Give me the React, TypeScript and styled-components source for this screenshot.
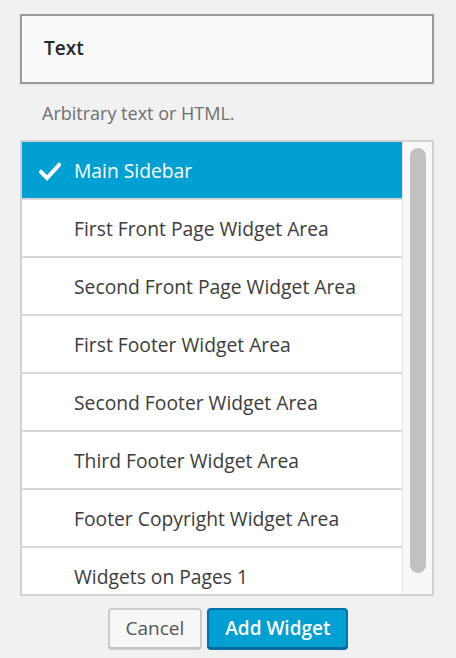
import React from "react";
import styled, { createGlobalStyle } from "styled-components";

const Global = createGlobalStyle`
  html, body { margin: 0; padding: 0; background: #f1f1f1; }
  body { font-family: "Open Sans", "Noto Sans", sans-serif; -webkit-font-smoothing: antialiased; }
  * { box-sizing: border-box; }
`;

const Page = styled.div`
  width: 456px;
  height: 658px;
  padding: 14px 22px 0 20px;
  display: flex;
  flex-direction: column;
`;

const WidgetTitleBox = styled.div`
  height: 70px;
  border: 2px solid #9a9a9a;
  background: #fafafa;
  box-shadow: 0 1px 2px rgba(0, 0, 0, 0.08);
  display: flex;
  align-items: center;
  padding: 0 0 3px 22px;
`;

const WidgetTitle = styled.h3`
  margin: 0;
  font-size: 19px;
  font-weight: 600;
  color: #23282d;
`;

const Description = styled.p`
  margin: 0;
  height: 56px;
  display: flex;
  align-items: center;
  padding: 1px 0 0 22px;
  font-size: 18px;
  color: #6f6f6f;
`;

const ListBox = styled.div`
  height: 456px;
  border: 2px solid #d2d2d2;
  background: #fff;
  display: flex;
`;

const Options = styled.div`
  flex: 1;
  overflow: hidden;
`;

const ScrollTrack = styled.div`
  width: 30px;
  flex: none;
  background: #f8f8f8;
  border-left: 1px solid #e4e4e4;
  padding: 6px 6px 0 7px;
`;

const ScrollThumb = styled.div`
  height: 425px;
  border-radius: 8px;
  background: #c1c1c1;
`;

const Row = styled.div<{ $selected?: boolean }>`
  height: 58px;
  border-bottom: 2px solid #d8d8d8;
  display: flex;
  align-items: center;
  padding-left: 52px;
  position: relative;
  font-size: 19.3px;
  white-space: nowrap;
  color: ${(p) => (p.$selected ? "#fff" : "#3c3c3c")};
  background: ${(p) => (p.$selected ? "#00a0d2" : "#fff")};
`;

const Check = styled.svg`
  position: absolute;
  left: 17px;
  top: 20px;
  width: 22px;
  height: 19px;
`;

const Footer = styled.div`
  display: flex;
  justify-content: center;
  gap: 5px;
  padding: 12px 0 0 2px;
`;

const Button = styled.button<{ $primary?: boolean }>`
  height: 41px;
  padding: 0 16px 2px;
  border-radius: 4px;
  font-family: "Open Sans", "Noto Sans", sans-serif;
  font-size: 19px;
  cursor: pointer;
  border: 2px solid ${(p) => (p.$primary ? "#0073aa" : "#cccccc")};
  border-bottom-color: ${(p) => (p.$primary ? "#006799" : "#c4c4c4")};
  background: ${(p) => (p.$primary ? "#00a0d2" : "#f7f7f7")};
  color: ${(p) => (p.$primary ? "#fff" : "#555")};
  font-weight: ${(p) => (p.$primary ? 600 : 400)};
  box-shadow: ${(p) => (p.$primary ? "0 1px 0 #0073aa" : "0 1px 0 #ccc")};
`;

const areas = [
  "Main Sidebar",
  "First Front Page Widget Area",
  "Second Front Page Widget Area",
  "First Footer Widget Area",
  "Second Footer Widget Area",
  "Third Footer Widget Area",
  "Footer Copyright Widget Area",
  "Widgets on Pages 1",
];

export default function App() {
  return (
    <>
      <Global />
      <Page>
        <WidgetTitleBox>
          <WidgetTitle>Text</WidgetTitle>
        </WidgetTitleBox>
        <Description>Arbitrary text or HTML.</Description>
        <ListBox>
          <Options>
            {areas.map((a, i) => (
              <Row key={a} $selected={i === 0}>
                {i === 0 && (
                  <Check viewBox="0 0 22 19">
                    <polyline
                      points="2,10 8,16 20,3"
                      fill="none"
                      stroke="#fff"
                      strokeWidth="4"
                      strokeLinecap="square"
                    />
                  </Check>
                )}
                {a}
              </Row>
            ))}
          </Options>
          <ScrollTrack>
            <ScrollThumb />
          </ScrollTrack>
        </ListBox>
        <Footer>
          <Button>Cancel</Button>
          <Button $primary>Add Widget</Button>
        </Footer>
      </Page>
    </>
  );
}
